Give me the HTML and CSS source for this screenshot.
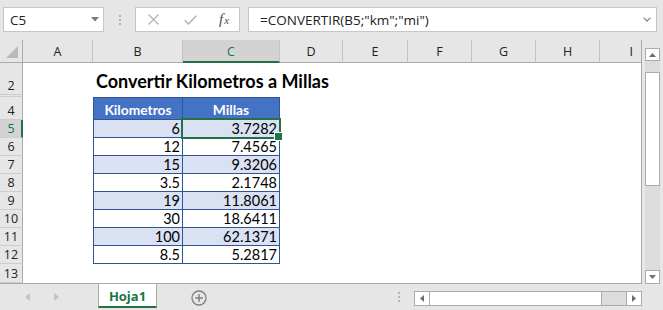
FILE: index.html
```html
<!DOCTYPE html>
<html lang="es">
<head>
<meta charset="utf-8">
<title>Convertir Kilometros a Millas</title>
<link rel="stylesheet" href="styles.css">
</head>
<body>
<div class="app">
  <div class="fbar">
    <div class="namebox">
      <span>C5</span>
      <svg class="caret" width="8" height="5" viewBox="0 0 8 5"><path d="M0 0H8L4 4.5Z" fill="#7a7a7a"/></svg>
    </div>
    <div class="grip"><i></i><i></i><i></i></div>
    <div class="fxbox">
      <svg class="ico-x" width="11" height="11" viewBox="0 0 11 11"><path d="M0.5 0.5L10.5 10.5M10.5 0.5L0.5 10.5" stroke="#b3b3b3" stroke-width="1.3" fill="none"/></svg>
      <svg class="ico-check" width="13" height="10" viewBox="0 0 13 10"><path d="M0.7 5.2L4.5 9L12.3 0.8" stroke="#b3b3b3" stroke-width="1.5" fill="none"/></svg>
      <span class="fx"><i>f</i><i class="x">x</i></span>
    </div>
    <div class="formula">
      <span>=CONVERTIR(B5;"km";"mi")</span>
      <svg class="chev" width="8" height="5" viewBox="0 0 8 5"><path d="M0.6 0.6L4 4L7.4 0.6" stroke="#8a8a8a" stroke-width="1.3" fill="none"/></svg>
    </div>
  </div>

  <div class="main">
    <div class="grid">
      <div class="corner"><svg width="13" height="13" viewBox="0 0 13 13"><path d="M12 0V12H0Z" fill="#b9b9b9"/></svg></div>
      <div class="ch">A</div>
      <div class="ch">B</div>
      <div class="ch sel">C</div>
      <div class="ch">D</div>
      <div class="ch">E</div>
      <div class="ch">F</div>
      <div class="ch">G</div>
      <div class="ch">H</div>
      <div class="ch last">I</div>

      <div class="rh">2</div>
      <div class="title">Convertir Kilometros a Millas</div>

      <div class="rh"></div>

      <div class="rh">4</div>
      <div class="th b">Kilometros</div>
      <div class="th c">Millas</div>

      <div class="rh sel">5</div>
      <div class="td b band">6</div>
      <div class="td c band active">3.7282</div>

      <div class="rh">6</div>
      <div class="td b">12</div>
      <div class="td c">7.4565</div>

      <div class="rh">7</div>
      <div class="td b band">15</div>
      <div class="td c band">9.3206</div>

      <div class="rh">8</div>
      <div class="td b">3.5</div>
      <div class="td c">2.1748</div>

      <div class="rh">9</div>
      <div class="td b band">19</div>
      <div class="td c band">11.8061</div>

      <div class="rh">10</div>
      <div class="td b">30</div>
      <div class="td c">18.6411</div>

      <div class="rh">11</div>
      <div class="td b band">100</div>
      <div class="td c band">62.1371</div>

      <div class="rh">12</div>
      <div class="td b">8.5</div>
      <div class="td c">5.2817</div>

      <div class="rh">13</div>
    </div>

    <div class="vscroll">
      <div class="sbtn up"><svg width="7" height="4" viewBox="0 0 7 4"><path d="M0 4H7L3.5 0Z" fill="#6e6e6e"/></svg></div>
      <div class="vtrack"><div class="vthumb"></div></div>
      <div class="sbtn down"><svg width="7" height="4" viewBox="0 0 7 4"><path d="M0 0H7L3.5 4Z" fill="#6e6e6e"/></svg></div>
    </div>
  </div>

  <div class="tabbar">
    <div class="nav">
      <svg width="5" height="8" viewBox="0 0 5 8"><path d="M5 0V8L0 4Z" fill="#c3c3c3"/></svg>
      <svg width="5" height="8" viewBox="0 0 5 8"><path d="M0 0V8L5 4Z" fill="#c3c3c3"/></svg>
    </div>
    <div class="tab">Hoja1</div>
    <svg class="plus" width="16" height="16" viewBox="0 0 16 16"><circle cx="8" cy="8" r="7" stroke="#7f7f7f" stroke-width="1.3" fill="none"/><path d="M8 4.2V11.8M4.2 8H11.8" stroke="#7f7f7f" stroke-width="1.5"/></svg>
    <div class="grip tgrip"><i></i><i></i><i></i></div>
    <div class="hscroll">
      <div class="hbtn"><svg width="4" height="7" viewBox="0 0 4 7"><path d="M4 0V7L0 3.5Z" fill="#6e6e6e"/></svg></div>
      <div class="hthumb"></div>
      <div class="htrack"></div>
      <div class="hbtn"><svg width="4" height="7" viewBox="0 0 4 7"><path d="M0 0V7L4 3.5Z" fill="#6e6e6e"/></svg></div>
    </div>
  </div>
</div>
</body>
</html>
```

FILE: styles.css
```css
* { box-sizing: border-box; margin: 0; padding: 0; }

body {
  margin: 0;
  width: 663px;
  height: 310px;
  overflow: hidden;
  background: #e6e6e6;
  font-family: "Open Sans", "Noto Sans", sans-serif;
  color: #222;
}

.app {
  width: 663px;
  height: 310px;
  display: flex;
  flex-direction: column;
  background: #e6e6e6;
}

/* ---------- formula bar ---------- */
.fbar {
  height: 40px;
  flex: none;
  display: flex;
  align-items: flex-start;
  padding: 7px 0 0 3px;
}

.namebox {
  width: 101px;
  height: 25px;
  background: #fff;
  border: 1px solid #c6c6c6;
  display: flex;
  align-items: center;
  justify-content: space-between;
  padding: 0 4px 0 6px;
  font-size: 13.5px;
}

.grip {
  margin: 8px 0 0 15px;
  display: flex;
  flex-direction: column;
  gap: 2px;
}
.grip i {
  display: block;
  width: 2px;
  height: 2px;
  background: #b4b4b4;
}

.fxbox {
  margin-left: 14px;
  width: 105px;
  height: 25px;
  background: #fff;
  border: 1px solid #c6c6c6;
  display: flex;
  align-items: center;
  padding-left: 12px;
}
.ico-check { margin-left: 25px; }
.fx {
  margin-left: 22px;
  font-family: "Liberation Serif", "DejaVu Serif", serif;
  font-size: 15px;
  color: #4a4a4a;
  display: flex;
  align-items: baseline;
}
.fx i { font-style: italic; }
.fx .x { font-size: 11px; margin-left: 1px; }

.formula {
  margin-left: 8px;
  width: 409px;
  height: 25px;
  background: #fff;
  border: 1px solid #c6c6c6;
  display: flex;
  align-items: center;
  justify-content: space-between;
  padding: 0 5px 0 11px;
  font-size: 13.5px;
}

/* ---------- sheet ---------- */
.main {
  height: 244px;
  flex: none;
  display: flex;
}

.grid {
  width: 642px;
  height: 244px;
  background: #fff;
  border-right: 1px solid #a9a9a9;
  border-bottom: 1px solid #a9a9a9;
  display: grid;
  grid-template-columns: 23px 70px 90px 97px 63px 65px 64px 64px 64px 41px;
  grid-template-rows: 23px 32px 2px 23px repeat(8, 18px) 19px;
}

.corner {
  background: #e6e6e6;
  border-right: 1px solid #ababab;
  border-bottom: 1px solid #ababab;
  display: flex;
  align-items: flex-end;
  justify-content: flex-end;
  padding: 0 3px 3px 0;
}

.ch {
  background: #e6e6e6;
  border-right: 1px solid #c3c3c3;
  border-bottom: 1px solid #ababab;
  display: flex;
  align-items: center;
  justify-content: center;
  font-size: 12.5px;
  padding-top: 1px;
}
.ch.last { border-right: none; justify-content: flex-end; padding-right: 8px; }
.ch.sel {
  background: #d3d3d3;
  color: #217346;
  border-bottom: 2px solid #217346;
}

.rh {
  grid-column: 1;
  background: #e6e6e6;
  border-right: 1px solid #ababab;
  border-bottom: 1px solid #cdcdcd;
  display: flex;
  align-items: flex-end;
  justify-content: center;
  font-size: 12.5px;
  line-height: 17px;
}
.rh.sel {
  background: #d3d3d3;
  color: #217346;
  border-right: 2px solid #217346;
  padding-left: 1px;
}

.title {
  grid-column: 3 / span 4;
  display: flex;
  align-items: flex-end;
  padding: 0 0 3px 3px;
  font-family: "Lato", sans-serif;
  font-weight: 700;
  font-size: 18px;
  color: #000;
  white-space: nowrap;
}

.th, .td {
  display: flex;
  align-items: flex-end;
  font-family: "Lato", sans-serif;
  font-size: 14.5px;
  line-height: 17px;
  white-space: nowrap;
  border-bottom: 1px solid #2f5597;
  border-right: 1px solid #2f5597;
}
.b { grid-column: 3; border-left: 1px solid #2f5597; }
.c { grid-column: 4; }

.th {
  background: #4472c4;
  color: #fff;
  font-weight: 700;
  font-size: 13.8px;
  justify-content: center;
  border-top: 1px solid #2f5597;
  padding-bottom: 1px;
}

.td {
  justify-content: flex-end;
  padding-right: 2px;
  color: #000;
}
.td.band { background: #d9e1f2; }

.td.active { position: relative; }
.td.active::after {
  content: "";
  position: absolute;
  left: -2px;
  top: -2px;
  right: -2px;
  bottom: -2px;
  border: 2px solid #217346;
}
.td.active::before {
  content: "";
  position: absolute;
  right: -4px;
  bottom: -4px;
  width: 7px;
  height: 7px;
  background: #217346;
  border: 1px solid #fff;
  z-index: 1;
}

/* vertical scrollbar */
.vscroll {
  width: 21px;
  display: flex;
  flex-direction: column;
  padding: 8px 3px 0 3px;
}
.sbtn {
  height: 13px;
  background: #fff;
  border: 1px solid #ababab;
  display: flex;
  align-items: center;
  justify-content: center;
  flex: none;
}
.vtrack {
  flex: 1;
  background: #dcdcdc;
  padding-top: 11px;
}
.vthumb {
  height: 114px;
  background: #fff;
  border: 1px solid #ababab;
}
.sbtn.down { height: 14px; }

/* ---------- tab bar ---------- */
.tabbar {
  height: 26px;
  flex: none;
  display: flex;
  align-items: flex-start;
}
.nav {
  width: 98px;
  height: 26px;
  display: flex;
  align-items: center;
  gap: 24px;
  padding: 0 0 0 25px;
}
.tab {
  width: 59px;
  height: 24px;
  background: #fff;
  border-left: 1px solid #ababab;
  border-right: 1px solid #ababab;
  border-bottom: 2px solid #217346;
  display: flex;
  align-items: center;
  justify-content: center;
  font-weight: 700;
  font-size: 13px;
  color: #217346;
  padding-top: 1px;
}
.plus { margin: 6px 0 0 34px; }
.tgrip { margin: 8px 0 0 191px; }
.hscroll {
  margin: 7px 0 0 14px;
  width: 228px;
  height: 15px;
  display: flex;
  border: 1px solid #ababab;
  background: #dcdcdc;
}
.hbtn {
  width: 15px;
  background: #fff;
  display: flex;
  align-items: center;
  justify-content: center;
  flex: none;
}
.hbtn:first-child { border-right: 1px solid #ababab; }
.hbtn:last-child { border-left: 1px solid #ababab; }
.hthumb {
  width: 172px;
  background: #fff;
  border-right: 1px solid #ababab;
}
.htrack { flex: 1; }
```
